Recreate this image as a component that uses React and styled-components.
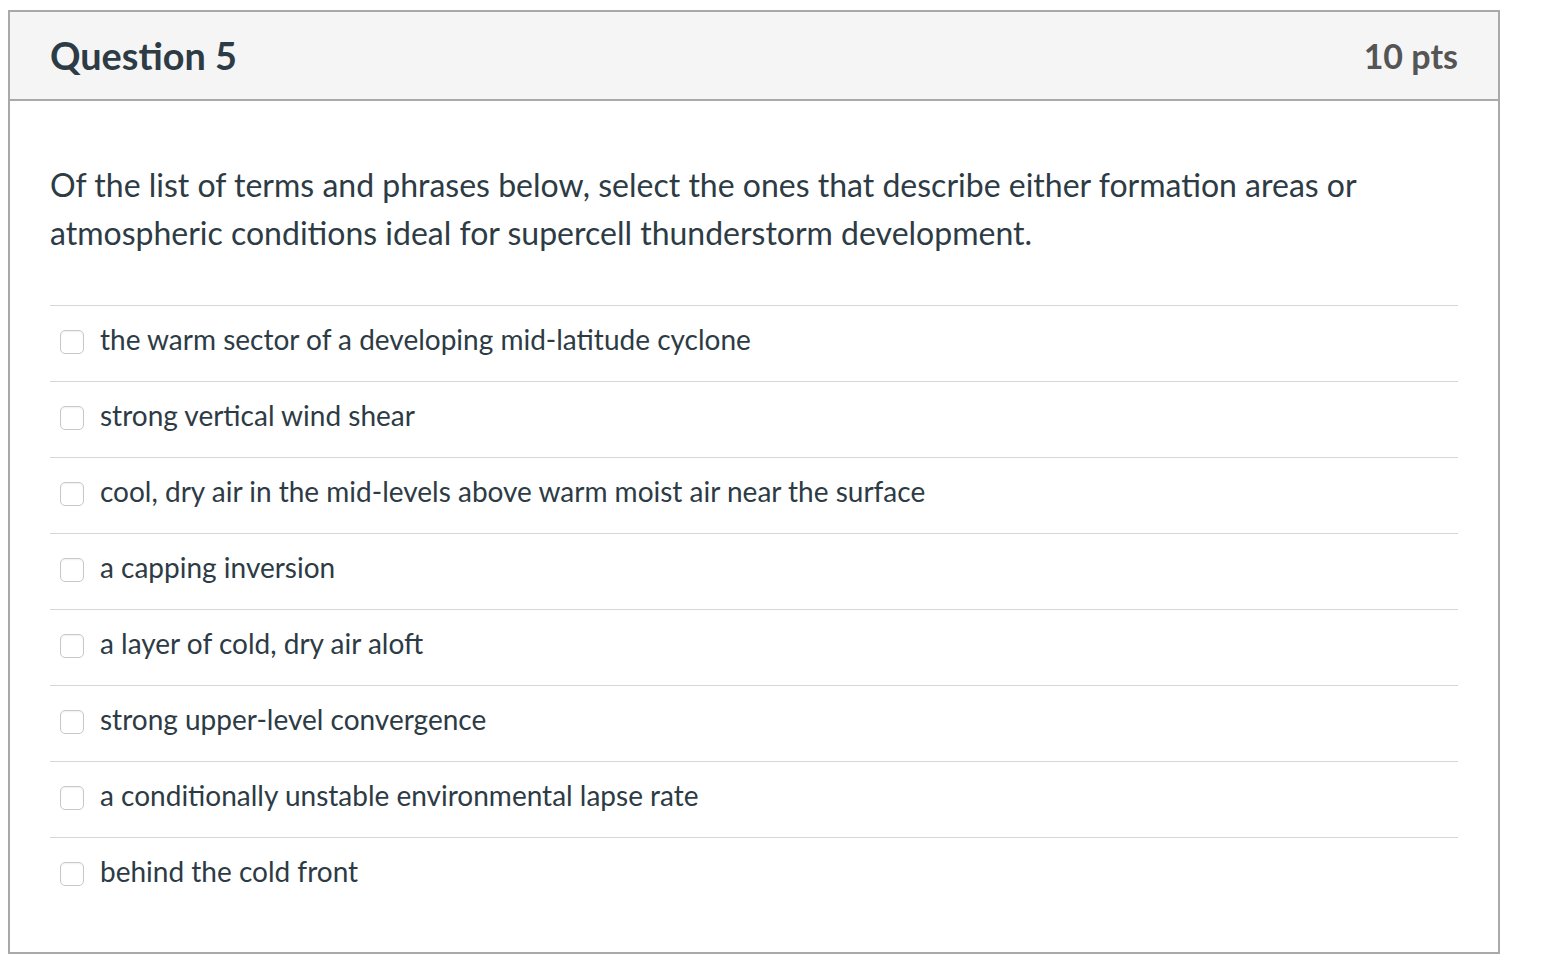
import React from 'react'
import styled, { createGlobalStyle } from 'styled-components'

const Global = createGlobalStyle`
  body {
    margin: 10px 8px;
    background: #fff;
    font-family: Lato, "Open Sans", sans-serif;
  }
`;

const Card = styled.div`
  width: 1488px;
  height: 940px;
  border: 2px solid #a9a9a9;
  box-sizing: content-box;
  display: flex;
  flex-direction: column;
`;

const Header = styled.div`
  height: 87px;
  background: #f5f5f5;
  border-bottom: 2px solid #a9a9a9;
  display: flex;
  align-items: center;
  justify-content: space-between;
  padding: 0 40px;
`;

const Title = styled.h2`
  margin: 0;
  font-size: 37.8px;
  font-weight: 700;
  color: #2d3b45;
`;

const Points = styled.div`
  font-size: 34px;
  font-weight: 700;
  color: #555;
`;

const Body = styled.div`
  padding: 60px 40px 0;
`;

const Prompt = styled.p`
  margin: 0 0 48px;
  font-size: 32px;
  line-height: 48px;
  color: #2d3b45;
`;

const Answers = styled.div`
  display: flex;
  flex-direction: column;
`;

const Answer = styled.label`
  height: 76px;
  box-sizing: border-box;
  border-top: 1px solid #d7d7d7;
  display: flex;
  align-items: center;
  gap: 16px;
  padding-left: 10px;
  padding-bottom: 10px;
  font-size: 28px;
  color: #2d3b45;
`;

const Box = styled.span`
  width: 22px;
  height: 22px;
  border: 1px solid #c4c9cd;
  border-radius: 5px;
  background: #fff;
  flex-shrink: 0;
  margin-top: 6px;
  box-shadow: inset 0 1px 2px rgba(0, 0, 0, 0.06);
`;

const answers = [
    'the warm sector of a developing mid-latitude cyclone',
    'strong vertical wind shear',
    'cool, dry air in the mid-levels above warm moist air near the surface',
    'a capping inversion',
    'a layer of cold, dry air aloft',
    'strong upper-level convergence',
    'a conditionally unstable environmental lapse rate',
    'behind the cold front'
];

function App() {
    return (
        <>
            <Global />
            <Card>
                <Header>
                    <Title>Question 5</Title>
                    <Points>10 pts</Points>
                </Header>
                <Body>
                    <Prompt>
                        Of the list of terms and phrases below, select the ones that describe either formation areas or atmospheric conditions ideal for supercell thunderstorm development.
                    </Prompt>
                    <Answers>
                        {answers.map((text, index) => (
                            <Answer key={index}>
                                <Box />
                                {text}
                            </Answer>
                        ))}
                    </Answers>
                </Body>
            </Card>
        </>
    )
}

export default App;
